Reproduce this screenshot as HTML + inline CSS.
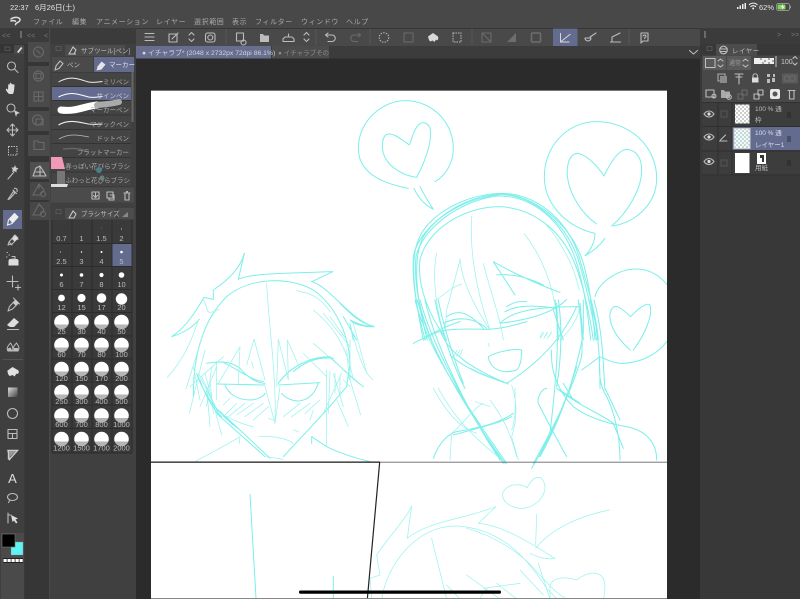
<!DOCTYPE html>
<html lang="ja"><head><meta charset="utf-8"><title>CLIP STUDIO</title>
<style>
html,body{margin:0;padding:0;background:#2b2b2b;width:800px;height:599px;overflow:hidden}
svg{display:block;position:absolute;left:0;top:0;filter:blur(.35px)}
text{font-family:"Liberation Sans","Noto Sans CJK JP",sans-serif;fill:#a8a8a8;font-size:7px}
.i{fill:none;stroke:#bcbcbc;stroke-width:1.1;stroke-linecap:round;stroke-linejoin:round}
.d{fill:none;stroke:#6a6a6a;stroke-width:1.1}
.s{fill:none;stroke:#7eefea;stroke-width:3.1;stroke-linecap:round;stroke-linejoin:round}
.t{stroke-width:2.2;stroke:#98f3ef}
.sz text{font-size:7.5px;text-anchor:middle;fill:#bcbcbc}
.sz circle{fill:#fff}
.sz .b{fill:url(#g)}
</style></head><body>
<svg width="800" height="599" viewBox="0 0 800 599" xmlns="http://www.w3.org/2000/svg">
<defs><linearGradient id="g" x1="0" y1="0" x2="0" y2="1"><stop offset=".66" stop-color="#fff"/><stop offset=".66" stop-color="#b5b5b5"/></linearGradient>
<clipPath id="cv"><rect x="151" y="90" width="516" height="509"/></clipPath></defs>
<!-- canvas -->
<rect width="800" height="599" fill="#2b2b2b"/>
<rect x="151" y="90" width="516" height="509" fill="#fff"/>
<rect x="151" y="90" width="516" height="1" fill="#777"/>
<g clip-path="url(#cv)">
<!-- Drawing group A: bubbles and girl top -->
<g transform="translate(340,90) scale(.33333)">
<path class="s" d="M205 295C150 285 55 260 55 175C55 90 130 32 195 32C280 32 340 100 340 175C340 215 320 255 285 275"/>
<path class="s" d="M222 295C235 325 255 345 280 358C265 335 250 310 240 290"/>
<path class="s" d="M208 165C185 150 165 130 145 132C125 135 125 170 130 190C145 235 195 258 230 262C250 225 272 170 272 130C272 100 250 90 235 105C220 120 215 150 208 165"/>
<path class="s" d="M765 430C690 415 613 350 613 260C613 170 680 95 770 95C870 95 950 170 950 265C950 340 890 395 820 408"/>
<path class="s" d="M792 258C770 225 735 190 710 190C685 195 680 230 682 260C690 320 730 375 770 402M792 258C810 220 835 180 860 178C890 180 905 205 905 240C905 300 860 370 815 408"/>
<path class="s" d="M765 430C765 450 755 480 735 497C760 485 780 465 795 445"/>
<path class="s" d="M765 620C775 580 830 537 890 537C930 537 965 560 985 590"/>
<path class="s" d="M250 750C230 650 205 520 235 450C260 380 370 310 490 310C600 315 690 400 720 510C740 580 770 680 775 750"/>
<path class="s" d="M262 750C235 650 215 530 245 450C280 380 380 320 500 312C610 330 700 420 730 520C750 590 760 680 765 750"/>
<path class="s" d="M275 750C245 680 220 590 228 500C245 420 350 335 470 318C560 315 650 370 700 490C730 570 745 680 752 750"/>
<path class="s" d="M256 750C232 670 212 560 222 490C240 420 340 330 460 314C570 305 670 390 712 500C738 580 758 680 770 750"/>
<path class="s" d="M320 750C270 680 230 590 240 510C260 420 370 350 480 350C580 355 660 420 700 510C730 580 750 680 760 750"/>
<path class="s t" d="M395 380C390 460 400 580 450 720M553 432C600 490 640 580 650 680L665 750M290 490C275 560 290 680 320 750M360 505C365 580 410 660 450 720M360 510L320 660L315 720M430 520C450 600 480 680 490 750M615 400C660 450 700 520 718 600"/>
<path class="s" d="M460 515L525 615M460 515C520 550 610 590 660 607M470 555C520 550 570 565 610 585M480 700C510 670 560 650 720 650M500 650C530 630 550 635 560 635M480 700C560 690 640 670 680 628M495 665C530 645 580 645 650 655"/>
<path class="s" d="M250 750C290 715 350 715 440 718C500 715 520 705 560 695M320 680C350 660 380 660 430 715M310 700C350 680 400 680 440 715"/>
<path class="s t" d="M290 630C320 605 340 590 365 582M720 650C710 700 680 730 660 750M600 745L612 728M612 745L622 730M622 745L634 728"/>
<path class="s" d="M0 640C30 670 60 700 103 710C80 712 50 705 35 695M30 700L40 750M10 680L50 750"/>
<path class="s" d="M650 640L655 750M640 660L670 750M720 640L730 750"/>
</g>
<!-- Drawing group B: girl bottom -->
<g transform="translate(400,300) scale(.33333)">
<path class="s" d="M45 0C70 100 130 220 320 490M60 0C90 110 170 280 310 490M75 0C100 110 180 300 300 480M52 0C80 110 150 260 315 490M105 0C120 80 160 200 195 265M115 0C130 80 170 200 190 250"/>
<path class="s" d="M40 130C80 110 130 80 180 65"/>
<path class="s" d="M120 90C140 150 200 200 320 250C400 200 480 130 530 20M210 205C250 225 290 240 325 252M150 165C190 200 240 225 310 245"/>
<path class="s" d="M265 170C290 155 340 145 365 150C365 180 360 200 350 210C320 220 290 215 275 195C268 185 265 175 265 170"/>
<path class="s t" d="M160 170L172 150M170 170L180 150M178 170L188 148M420 112L428 95M432 115L442 96M445 112L455 96M265 130L268 140"/>
<path class="s t" d="M335 255C350 300 355 350 335 410L355 480M345 265C345 300 350 350 335 390"/>
<path class="s" d="M100 475C120 420 150 400 170 395C230 385 300 370 340 340M160 405C250 380 310 365 335 350"/>
<path class="s t" d="M150 480L155 400C190 370 225 320 250 310M225 305L270 320M270 300C300 340 330 390 350 470M100 265C130 320 170 380 230 400M115 265C150 330 200 400 320 490"/>
<path class="s" d="M440 265C425 265 410 295 415 310C430 340 450 380 500 470"/>
<path class="s" d="M400 490C440 420 510 290 545 170C550 100 540 50 535 0M395 505C440 430 480 350 500 290M420 470C470 380 520 260 550 100L550 0M410 480C460 390 500 300 530 200"/>
<path class="s" d="M465 0C480 100 470 230 450 400L420 470M475 0C490 100 480 200 470 260"/>
<path class="s" d="M455 150C450 220 480 280 520 320C560 350 620 370 680 380C730 390 770 420 770 480M470 265C540 320 600 340 640 370L670 445M480 270L540 310M490 250L520 300"/>
<path class="s" d="M570 0C600 100 600 210 600 265M582 0C610 100 610 210 615 270M600 170C595 220 600 260 620 290C640 330 660 400 660 480M615 265L660 360"/>
<path class="s" d="M800 125C770 165 720 190 660 190C640 188 620 180 605 172M545 210L600 170"/>
<path class="s" d="M692 50C670 30 650 12 640 22C620 40 625 90 690 150M692 50C710 30 740 5 750 15C760 50 730 110 700 150"/>
</g>
<!-- Drawing group C: boy -->
<g transform="translate(150,240) scale(.33333)">
<path class="s" d="M283 40C275 70 250 110 190 150L190 178L162 172C140 210 110 260 65 290C100 280 130 260 148 238"/>
<path class="s" d="M283 40L265 118C300 100 400 100 548 95L485 125C540 140 600 240 672 260C640 258 620 250 600 240"/>
<path class="s" d="M130 470C130 340 160 240 230 170C300 110 420 110 490 150C560 200 600 290 600 380"/>
<path class="s t" d="M350 130C355 250 380 400 375 550"/>
<path class="s t" d="M52 412C90 370 120 320 145 240M108 447L160 280M118 520L165 330M120 440L220 350M150 500L200 380M165 400L215 585M180 420L190 520M170 440L180 560M440 152C480 160 510 170 540 215M160 180C180 210 160 230 208 208M130 380L150 480M145 400L205 520M155 410L210 530M185 380L170 500M200 365L200 480"/>
<path class="s" d="M170 370C200 365 240 360 270 385C290 410 320 430 345 430M215 365C260 385 300 420 340 425M200 432L345 435M225 435C235 460 260 480 300 480C320 480 340 470 345 460"/>
<path class="s" d="M385 435L510 428M395 460C420 490 480 500 505 430M385 430C420 380 480 350 540 350C570 380 600 410 640 440M430 395C470 360 510 350 550 355"/>
<path class="s t" d="M265 430L270 320L205 430M290 375L312 297L345 420M380 440L385 298L415 420L412 300L450 385M345 440L375 550L390 440M460 340L530 410M490 310L640 440M305 365L310 385"/>
<path class="s" d="M140 400C160 460 200 520 270 570L360 655M400 650L530 510L590 440L600 370M150 420C170 480 200 520 215 530M205 510L275 575M200 520L345 650"/>
<path class="s t" d="M210 520C240 535 280 555 310 560M328 590C360 585 410 595 430 610M135 665C180 640 230 615 270 590L268 610M350 650L400 658M355 535L370 540M430 570L445 575"/>
<path class="s" d="M485 610L485 590L530 620C570 640 620 655 660 665"/>
<path class="s t" d="M490 210C540 250 590 310 610 420M600 250C620 330 640 400 670 420M610 250L650 400M530 390L530 620M540 395L535 520M560 480L595 560M600 420L632 525M540 230L590 300M590 330L598 420M575 400L520 520M520 220L600 320M550 400L580 500M580 420L600 440M600 300L600 420M555 400L555 460M570 410L570 470"/>
<path class="s t" d="M220 530L260 490M235 530L285 490M260 525L310 490M285 530L340 490M220 495L240 475M400 530L450 490M425 530L480 490M465 520L510 480M480 540L490 510M310 540L355 500"/>
</g>
<!-- panel lines -->
<rect x="151" y="461.500" width="229" height="1.300" fill="#222"/>
<rect x="380" y="461.700" width="287" height="1" fill="#777"/>
<!-- Drawing group D: lower panel -->
<g transform="translate(150,455) scale(.33333)">
<path class="s" d="M300 118C305 200 312 320 318 432M550 365L550 432"/>
<path class="s t" d="M1132 98C1110 85 1075 85 1060 110C1050 135 1080 160 1115 160C1150 160 1185 130 1185 95C1180 55 1150 60 1132 98M1160 178L1157 270"/>
<path class="s t" d="M785 152C770 190 720 240 680 300L690 360L660 370L665 432M785 152L772 250C830 200 950 190 1038 155L985 205C1060 210 1150 270 1215 310C1190 315 1160 305 1140 295"/>
<path class="s t" d="M695 432C710 330 800 210 920 213C1040 220 1120 290 1190 400L1220 432M950 220C1040 245 1120 300 1160 350C1190 380 1210 410 1250 432M1157 280C1200 225 1280 185 1378 165M845 250L890 432M950 360L1050 432M1110 345L1180 420M1165 325L1200 432M1200 432L1200 390C1210 365 1250 365 1280 375C1310 350 1360 340 1365 390C1365 410 1362 425 1360 432M1000 400L1110 385M990 430L1010 400M1040 385L1100 432M890 390L930 432"/>
<path d="M689 22L652 432" fill="none" stroke="#222" stroke-width="3.600"/>
</g>
</g>
<rect x="151" y="598" width="516" height="1" fill="#888"/>
<rect x="299" y="590.500" width="202" height="3.200" rx="1.500" fill="#000"/>

<!-- top bars -->
<rect width="800" height="28" fill="#484848"/>
<rect x="136" y="28" width="564" height="18" fill="#494949"/>
<rect y="28" width="800" height=".7" fill="#2e2e2e"/>
<rect x="136" y="46" width="564" height="12.500" fill="#3c3c3c"/>
<rect x="136" y="46" width="135" height="12.500" fill="#676e90"/>
<rect x="272" y="46" width="57" height="12.500" fill="#4c4c4c"/>
<text x="10" y="10" style="fill:#e6e6e6;font-size:7.500px">22:37</text>
<text x="35" y="10" style="fill:#e6e6e6;font-size:7.500px">6月26日(土)</text>
<path d="M11 19c3-2.500 9-2 9 .8c0 3-4.500 2.500-4.500 4.800M11 21c2-.6 3.500-.3 4.500.3" fill="none" stroke="#ddd" stroke-width="1.500" stroke-linecap="round"/>
<g style="letter-spacing:.6px">
<text x="33" y="24">ファイル</text><text x="72" y="24">編集</text><text x="96" y="24">アニメーション</text><text x="156" y="24">レイヤー</text><text x="194" y="24">選択範囲</text><text x="232" y="24">表示</text><text x="255" y="24">フィルター</text><text x="301" y="24">ウィンドウ</text><text x="346" y="24">ヘルプ</text>
</g>
<text x="142" y="55" style="fill:#d4d4d8;font-size:6.800px">● イチャラブ* (2048 x 2732px 72dpi 86.1%)</text>
<text x="278" y="55" style="fill:#8a8a8a;font-size:6.500px">● イチャラブその</text>
<path class="i" d="M689.500 50.500l4 3.500l4-3.500"/>
<!-- status -->
<path d="M737 9h1.500v-2h-1.500zM739.500 9H741v-3.500h-1.500zM742 9h1.500v-5h-1.500zM744.500 9H746V3h-1.500z" fill="#eee"/>
<path d="M749 5c2.500-2.500 6-2.500 8.500 0M750.500 6.800c1.500-1.500 4-1.500 5.500 0" fill="none" stroke="#eee" stroke-width="1.100"/><circle cx="753.200" cy="8.500" r="1" fill="#eee"/>
<text x="759" y="10" style="fill:#e6e6e6;font-size:7.500px">62%</text>
<rect x="776.500" y="3.500" width="13" height="7" rx="1.800" fill="none" stroke="#aaa" stroke-width=".7"/><rect x="777.500" y="4.500" width="8" height="5" rx="1" fill="#7ed957"/><path d="M783 4l-2 3.200h1.700l-.7 2.800l2.500-3.500h-1.600z" fill="#fff"/><rect x="790" y="5.800" width=".8" height="2.500" fill="#aaa"/>

<!-- toolbar -->
<g>
<rect x="553" y="28.500" width="24.500" height="17.500" fill="#636b8e"/>
<path d="M226 29v16M316 29v16M370 29v16M472 29v16M629 29v16" stroke="#5f5f5f" stroke-width=".7"/>
<path class="i" d="M145 33.500h9M145 37h9M145 40.500h9"/>
<path class="i" d="M169 34h8v8h-8zM172 39l6-6"/>
<path class="i" d="M189 35l2.500-2.500l2.500 2.500M189 39l2.500 2.500l2.500-2.500"/>
<rect x="205.500" y="33" width="9.500" height="9" rx="2" class="i"/><circle cx="210.300" cy="37.500" r="2.500" class="i"/>
<path class="i" d="M236.500 33h7v8h-7zM241 42.500a2.500 2.500 0 1 0 5 0a2.500 2.500 0 1 0-5 0"/>
<path d="M260 34h3l1 1.500h5v6.500h-9z" fill="#bcbcbc"/>
<path class="i" d="M283 41.500h11v-2.500l-2-2h-7l-2 2zM288.500 37v-3"/>
<path class="i" d="M304 35l2.500-2.500l2.500 2.500M304 39l2.500 2.500l2.500-2.500"/>
<path class="i" d="M326 35h6a3 3 0 0 1 0 6.500h-4M328 33l-2.500 2l2.500 2"/>
<path class="d" d="M360 35h-6a3 3 0 0 0 0 6.500h4M358 33l2.500 2l-2.500 2"/>
<circle cx="384" cy="37.500" r="4.800" fill="none" stroke="#bcbcbc" stroke-dasharray="1.500 1.200"/>
<path class="d" d="M404 33h9v9h-9z"/>
<path d="M428 36.500l5-3.500l5 3.500c1 3-1 5-2 3l-1.500 2.500l-2-1.500l-2 1c-1.500-.5-2-3-2.500-5z" fill="#d8d8d8"/>
<path d="M453 33h8v9h-8z" fill="none" stroke="#bcbcbc" stroke-dasharray="1.500 1"/>
<path class="d" d="M482 33h9v9h-9zM482 33l9 9"/>
<path d="M507 42h9v-9z" fill="#6e6e6e"/>
<rect x="531.500" y="33" width="9" height="9" rx="1" fill="none" stroke="#6e6e6e" stroke-width="1.500"/>
<path d="M560.500 33v9h9M560.500 42l10-8" fill="none" stroke="#d8d8dc" stroke-width="1"/>
<path class="i" d="M585 38h6a3 3 0 0 1-6 0M590 37l6-4"/>
<path class="i" d="M610.500 42h10M612 42v-5M612 37l8-4"/>
<path class="i" d="M641 33h7v8h-5l-2 2zM643 36c1-1.500 3-1 3 .3c0 1-1.500 1-1.500 2.200"/>
</g>

<!-- left strip headers -->
<rect y="28" width="136" height="600" fill="#363636"/>
<rect x="0" y="28" width="136" height="16" fill="#3b3b3b"/>
<text x="2" y="38" style="fill:#777;font-size:7px">&lt;&lt;</text><text x="27" y="38" style="fill:#777;font-size:7px">&lt;&lt;</text><text x="44" y="38" style="fill:#777;font-size:7px">&lt;</text>
<rect x="20" y="31" width="2" height="7" fill="#6a6a6a"/><rect x="131" y="31" width="2" height="7" fill="#6a6a6a"/>
<!-- tool col -->
<rect y="44" width="24.500" height="555" fill="#3f3f3f"/>
<rect y="44" width="24.500" height="9" fill="#353535"/><rect x="14" y="45" width="10" height="9" fill="#4a4a4a"/>
<path d="M17 52l4-5l1.500 1l-4 5z" fill="#ddd"/>
<rect x="5" y="47" width="5" height="3.500" fill="none" stroke="#666" stroke-width=".6"/>
<!-- tool icons -->
<circle cx="11.500" cy="66" r="4" class="i"/><path class="i" d="M14.500 69l3.500 3.500"/>
<path d="M9 94c-2-2-3.500-4-3-5s1.500 0 2 1l.2-5c0-1 1.300-1 1.300 0l.3-1.500c.2-1 1.500-1 1.500 0v1c.4-1 1.500-.8 1.500.2l.3 0c.5-.7 1.500-.5 1.400.5l-.5 5.800l-1 3z" fill="#ddd"/>
<circle cx="11" cy="108" r="4" class="i"/><path d="M14 110l6 3l-3 1l-1 3z" fill="#d0d0d0"/>
<path class="i" d="M12.500 124.500v11M7 130h11M10.500 126l2-2l2 2M10.500 134l2 2l2-2M9 128l-2 2l2 2M16 128l2 2l-2 2"/>
<rect x="8.500" y="146.500" width="8.500" height="8.500" fill="none" stroke="#bcbcbc" stroke-dasharray="1.500 1"/>
<path class="i" d="M8 179l6-7"/><path d="M15 165l1 2.500l2.500 1l-2 1.500v2.500l-2-1.500l-2.500 1l.8-2.500l-1.500-2l2.700 0z" fill="#ccc"/>
<path class="i" d="M9 198l-1 1.500l1.500-.5l5.500-6l-1.500-1.500zM13 190l3.500 3.500M14.500 188.500c1-1 3.500 1 2.500 3"/>
<rect x="3" y="210" width="19" height="19" fill="#636b8e"/>
<path d="M7.500 225l1-5l6-6.500l3.500 3.500l-6 6.500z" fill="none" stroke="#eee" stroke-width="1.100"/><path d="M9 219l3 4l6-6.500l-3.500-3.500z" fill="#eee"/>
<path class="i" d="M8 245l1-3l6-7l3 3l-6 6zM9 242l3 3M14 235.500l4 4"/><path d="M12 239l3-3.500l3 3l-3.500 3z" fill="#ddd"/>
<path d="M9.500 259h7a2 2 0 0 1 2 2v4.500h-10v-5z" fill="#ddd"/><path class="i" d="M12 256.500h3v2.500h-3M7 252.500h.5M9 255h.5M6.500 257h.5"/>
<path class="i" d="M12.500 276v11M7 281.500h11M18 285v5M15.500 287.500h5"/>
<path class="i" d="M8 311l1.500-4.500l6-6.500l3 3l-6 6zM13.500 298l6 6"/><path d="M13 303l3-3l2.500 2.500l-3 3z" fill="#ccc"/>
<path d="M7 325l7-7l5 4l-5 5h-4z" fill="#ddd"/><path class="i" d="M7.500 329.500h11"/>
<path d="M8 351c-2-3 0-5 2.500-8c2 2.500 3 5 2 8zM13.500 351c-1-3 1-6 3-8c2 3 3.500 5 1.500 8z" fill="none" stroke="#bcbcbc"/><path d="M8 351c-1-2 0-3 2.500-3.500l2 3.500zM14 351l0-3l4 0l0 3z" fill="#bcbcbc"/>
<path d="M3 359.500h20" stroke="#5c5c5c" stroke-width=".8"/>
<path d="M7 371l5.500-4l6 3.500c1 3-1 4-2 3l-2 3l-2-1.500l-2.500 1c-1.500-.5-2.500-3-2.500-5z" fill="#e0e0e0"/>
<defs><linearGradient id="gr" x1="0" y1="0" x2="1" y2="1"><stop offset="0" stop-color="#ddd"/><stop offset="1" stop-color="#444"/></linearGradient></defs>
<rect x="8" y="387.500" width="9.500" height="9.500" fill="url(#gr)"/>
<circle cx="12.500" cy="413.500" r="5" class="i"/>
<path class="i" d="M8 429.500h9v9h-9zM8 433.500h9M12.500 433.500v5"/>
<path d="M8 450.500h9.500l-8 9z M8.500 450.500v9" fill="none" stroke="#ccc" stroke-width="1.400"/><path d="M9 451h7l-7 7z" fill="#999"/>
<text x="12.500" y="483" text-anchor="middle" style="font-size:13px;fill:#ddd">A</text>
<ellipse cx="12.500" cy="497" rx="5" ry="3.500" class="i"/><path class="i" d="M10 500l-1.500 2.500"/>
<path class="i" d="M8 513v10M8 515h3"/><path d="M11 515l7 3.500l-2.500 1l2 3l-1.500 1l-2-3l-1.500 1.500z" fill="#ddd"/>
<!-- colour -->
<rect x="1" y="533" width="23" height="66" fill="#4a4a4a"/>
<rect x="10" y="541" width="14" height="15" fill="#3c3c3c"/>
<rect x="11" y="542" width="12" height="13" fill="#5ef2f4" stroke="#999" stroke-width=".5"/>
<rect x="2" y="534" width="13" height="13" fill="#000" stroke="#777" stroke-width=".6"/>
<rect x="3" y="558" width="20" height="5" fill="#222"/>
<g fill="#fff"><rect x="3.500" y="559" width="3.200" height="3"/><rect x="7.500" y="559" width="3.200" height="3"/><rect x="11.500" y="559" width="3.200" height="3"/><rect x="15.500" y="559" width="3.200" height="3"/><rect x="19.500" y="559" width="3.200" height="3"/></g>

<!-- sub col -->
<rect x="28" y="42" width="21" height="20" fill="#4a4a4a"/><rect x="28" y="66" width="21" height="41" fill="#4a4a4a"/><rect x="28" y="111" width="21" height="20" fill="#4a4a4a"/><rect x="28" y="135" width="21" height="21" fill="#4a4a4a"/>
<rect x="30" y="162" width="19" height="17" fill="#4f4f4f"/><rect x="30" y="182" width="19" height="18" fill="#474747"/><rect x="30" y="202" width="19" height="18" fill="#474747"/>
<circle cx="38.500" cy="52" r="5" class="d"/><path class="d" d="M36.500 50l4 4"/><circle cx="38.500" cy="76" r="5" class="d"/><rect x="36" y="73.500" width="5" height="5" class="d"/><path class="d" d="M34 92h9v9h-9zM34 96.500h9M38.500 92v9"/><circle cx="37.500" cy="120" r="5" class="d"/><path class="d" d="M36 119h7v6h-7z"/><path class="d" d="M34 141h4l1 1.500h5v7h-10z"/>
<path class="i" d="M33 176h13l-2-4l-4-6l-4 2zM36 172h8M40 166v10"/>
<path class="d" d="M33 195l6-11l5 6l-4 5zM39 184v5"/><circle cx="43" cy="194" r="2.500" class="d"/>
<path class="d" d="M33 215l6-11l5 6l-4 5z"/><circle cx="43" cy="214" r="2.500" class="d"/>
<rect x="49.500" y="28" width=".8" height="571" fill="#595959"/>

<!-- subtool panel -->
<rect x="50.300" y="28" width="85.700" height="571" fill="#404040"/>
<rect x="50.300" y="28" width="85.700" height="16" fill="#3b3b3b"/>
<rect x="65" y="45" width="60" height="11" fill="#4c4c4c"/>
<path d="M69 54l4-7l3 3l-2 4zM72 54h4" fill="none" stroke="#ccc"/>
<rect x="56" y="46.500" width="5" height="4" fill="none" stroke="#666" stroke-width=".6"/>
<text x="81" y="53" style="fill:#bcbcbc;font-size:6.500px">サブツール[ペン]</text>
<rect x="52" y="57" width="41" height="15" fill="#4a4a4a"/><rect x="94" y="57" width="40" height="15" fill="#636b8e"/>
<path class="i" d="M55 70l1-4l4-5l3 2.500l-4 5z"/><path d="M96.500 70.500l1-4l4-5l4 3l-4 5z" fill="#e4e4e8"/>
<text x="67" y="67" style="font-size:6.500px;fill:#bcbcbc">ペン</text><text x="109" y="67" style="font-size:6.500px;fill:#e2e2e6">マーカー</text>
<!-- brush list -->
<rect x="52" y="72" width="79" height="115" fill="#333"/>
<g fill="#444"><rect x="52" y="72.500" width="79" height="13.500"/><rect x="52" y="101" width="79" height="13.500"/><rect x="52" y="115.500" width="79" height="13.500"/><rect x="52" y="130" width="79" height="13"/><rect x="52" y="144" width="79" height="13"/><rect x="52" y="158" width="79" height="13.500"/><rect x="52" y="172.500" width="79" height="14"/></g>
<rect x="52" y="87" width="79" height="13" fill="#636b8e"/>
<path d="M58.500 82c12-7 20-3 30 0c6 1 10 0 14-.5" fill="none" stroke="#eee" stroke-width="1"/>
<path d="M58.500 97c12-6 20-3 30 0c6 1 10 0 14-.5" fill="none" stroke="#fff" stroke-width="1"/>
<path d="M61 110c15 2 24-4 36-5" fill="none" stroke="#fff" stroke-width="7" stroke-linecap="round"/><path d="M97 105c10-1 14-1 22-3" fill="none" stroke="#aaa" stroke-width="6" stroke-linecap="round"/>
<path d="M58.500 125c10-6 20-3 30-1c6 1 10 0 14 0" fill="none" stroke="#eee" stroke-width="1.100"/>
<path d="M59 139c10-6 20-4 30-2" fill="none" stroke="#bbb" stroke-width=".8"/>
<path d="M63 149c10-1 18-1 25 3l-8-3" fill="none" stroke="#666" stroke-width="1.500"/>
<text x="129" y="84" style="font-size:6.500px;text-anchor:end">ミリペン</text><text x="129" y="98" style="font-size:6.500px;text-anchor:end;fill:#ccc">サインペン</text><text x="129" y="112" style="font-size:6.500px;text-anchor:end">マーカーペン</text><text x="129" y="126.500" style="font-size:6.500px;text-anchor:end">マジックペン</text><text x="129" y="140.500" style="font-size:6.500px;text-anchor:end">ドットペン</text><text x="129" y="154.500" style="font-size:6.500px;text-anchor:end">フラットマーカー</text><text x="130" y="168.500" style="font-size:6.500px;text-anchor:end">春っぽい花びらブラシ</text><text x="130" y="182.500" style="font-size:6.500px;text-anchor:end">ふわっと花びらブラシ</text>
<path d="M51 157h11l3 12H51z" fill="#f09ab8"/><path d="M57 171h8v13h-8z" fill="#777"/><path d="M51 184h17l-1 3H51z" fill="#ddd"/><circle cx="99" cy="170" r="3" fill="#4d7f88"/><circle cx="102" cy="178" r="2.500" fill="#6a7f80"/>
<rect x="131.500" y="72" width="2" height="50" fill="#666"/>
<rect x="51" y="187.500" width="83" height="15" fill="#4b4b4b"/>
<path class="i" d="M92 192h7v7h-7zM95.500 193v4M93.500 195.500l2 2l2-2"/><path class="i" d="M107 192h6v6h-6zM110 195h4v5h-5v-2"/><path class="i" d="M124 193h6M125 193v7h4v-7M126.500 192v-.5h1v.5"/>
<!-- size panel -->
<rect x="65" y="208" width="51" height="11" fill="#4c4c4c"/><rect x="118" y="208" width="16" height="11" fill="#4c4c4c"/>
<rect x="56" y="209.500" width="5" height="4" fill="none" stroke="#666" stroke-width=".6"/>
<path d="M69 218l4-7l3 3l-2 4z" fill="none" stroke="#ccc"/><path d="M122 217l6-5v5z" fill="#888"/>
<text x="81" y="216" style="font-size:6.500px;fill:#bcbcbc">ブラシサイズ</text>
<rect x="52" y="220" width="80" height="233" fill="#3a3a3a"/>
<rect x="112" y="243.500" width="20" height="22.500" fill="#636b8e"/>
<g stroke="#2c2c2c" stroke-width=".9" fill="none"><path d="M52 243.500h80M52 266.500h80M52 289.500h80M52 312.500h80M52 336h80M52 359h80M52 382h80M52 405h80M52 428.500h80M52 453h80M72 220v233M92 220v233M112 220v233M132 220v233M52 220v233"/></g>
<g class="sz">
<circle cx="121.500" cy="229" r=".5"/><circle cx="101.500" cy="228" r=".3"/>
<text x="61.500" y="241">0.7</text><text x="81.500" y="241">1</text><text x="101.500" y="241">1.5</text><text x="121.500" y="241">2</text>
<circle cx="60.500" cy="252" r=".5"/><circle cx="81.500" cy="252" r=".7"/><circle cx="101.500" cy="252" r="1"/><circle cx="121.500" cy="252" r="1.300"/>
<text x="61.500" y="264">2.5</text><text x="81.500" y="264">3</text><text x="101.500" y="264">4</text><text x="121.500" y="264">5</text>
<circle cx="61.500" cy="275" r="1.500"/><circle cx="81.500" cy="275" r="1.800"/><circle cx="101.500" cy="275" r="2.100"/><circle cx="121.500" cy="275" r="2.800"/>
<text x="61.500" y="287">6</text><text x="81.500" y="287">7</text><text x="101.500" y="287">8</text><text x="121.500" y="287">10</text>
<circle cx="61.500" cy="298" r="3.400"/><circle cx="81.500" cy="298" r="4.100"/><circle cx="101.500" cy="298" r="4.800"/><circle cx="121.500" cy="299" r="5.700"/>
<text x="61.500" y="310">12</text><text x="81.500" y="310">15</text><text x="101.500" y="310">17</text><text x="121.500" y="310">20</text>
<circle class="b" cx="61.500" cy="322" r="7.300"/><circle class="b" cx="81.500" cy="322" r="7.300"/><circle class="b" cx="101.500" cy="322" r="7.300"/><circle class="b" cx="121.500" cy="322" r="7.300"/>
<text x="61.500" y="334">25</text><text x="81.500" y="334">30</text><text x="101.500" y="334">40</text><text x="121.500" y="334">50</text>
<circle class="b" cx="61.500" cy="345" r="7.300"/><circle class="b" cx="81.500" cy="345" r="7.300"/><circle class="b" cx="101.500" cy="345" r="7.300"/><circle class="b" cx="121.500" cy="345" r="7.300"/>
<text x="61.500" y="357">60</text><text x="81.500" y="357">70</text><text x="101.500" y="357">80</text><text x="121.500" y="357">100</text>
<circle class="b" cx="61.500" cy="369" r="7.300"/><circle class="b" cx="81.500" cy="369" r="7.300"/><circle class="b" cx="101.500" cy="369" r="7.300"/><circle class="b" cx="121.500" cy="369" r="7.300"/>
<text x="61.500" y="381">120</text><text x="81.500" y="381">150</text><text x="101.500" y="381">170</text><text x="121.500" y="381">200</text>
<circle class="b" cx="61.500" cy="392" r="7.300"/><circle class="b" cx="81.500" cy="392" r="7.300"/><circle class="b" cx="101.500" cy="392" r="7.300"/><circle class="b" cx="121.500" cy="392" r="7.300"/>
<text x="61.500" y="404">250</text><text x="81.500" y="404">300</text><text x="101.500" y="404">400</text><text x="121.500" y="404">500</text>
<circle class="b" cx="61.500" cy="415.500" r="7.300"/><circle class="b" cx="81.500" cy="415.500" r="7.300"/><circle class="b" cx="101.500" cy="415.500" r="7.300"/><circle class="b" cx="121.500" cy="415.500" r="7.300"/>
<text x="61.500" y="427">600</text><text x="81.500" y="427">700</text><text x="101.500" y="427">800</text><text x="121.500" y="427">1000</text>
<circle class="b" cx="61.500" cy="439" r="7.300"/><circle class="b" cx="81.500" cy="439" r="7.300"/><circle class="b" cx="101.500" cy="439" r="7.300"/><circle class="b" cx="121.500" cy="439" r="7.300"/>
<text x="61.500" y="450.500">1200</text><text x="81.500" y="450.500">1500</text><text x="101.500" y="450.500">1700</text><text x="121.500" y="450.500">2000</text>
</g>

<!-- Right panel -->
<rect x="700" y="28" width="100" height="571" fill="#383838"/>
<rect x="700" y="28" width="100" height="16" fill="#3b3b3b"/>
<rect x="704" y="31" width="2" height="7" fill="#6a6a6a"/>
<text x="777" y="37" style="fill:#777;font-size:7px">&gt;</text><text x="791" y="37" style="fill:#777;font-size:7px">&gt;&gt;</text>
<rect x="716" y="44" width="41" height="11.500" fill="#4c4c4c"/>
<rect x="707" y="46.500" width="5" height="4" fill="none" stroke="#666" stroke-width=".6"/>
<circle cx="723.500" cy="50" r="3.800" class="i"/><path class="i" d="M720 49h7M720 51.500h7"/>
<text x="732" y="53" style="font-size:6.500px;fill:#bcbcbc;letter-spacing:.5px">レイヤー</text>
<rect x="702" y="55.500" width="98" height="47" fill="#484848"/>
<rect x="703" y="56" width="23" height="14" fill="#5a5a5a"/><rect x="727" y="56" width="24" height="14" fill="#5a5a5a"/>
<rect x="705.500" y="58.500" width="9.500" height="9" fill="none" stroke="#ccc" stroke-width=".9"/>
<path class="i" d="M718 61l2.500-2l2.500 2M718 65l2.500 2l2.500-2M743 61l2.500-2l2.500 2M743 65l2.500 2l2.500-2M793 58.500l2-2l2 2M793 63l2 2l2-2"/>
<text x="729" y="65" style="font-size:6px;fill:#999">通常</text>
<rect x="754" y="58" width="20" height="6" fill="#eee"/><path d="M760 58h2v2h-2zM764 60h2v2h-2zM768 58h2v2h-2zM772 60h2v2h-2zM762 62h2v2h-2zM768 62h2v2h-2z" fill="#aaa"/>
<rect x="775" y="56" width="2" height="11" fill="#888"/>
<text x="781" y="64" style="font-size:7px;fill:#ccc">100</text>
<path class="d" d="M718 74h7v7h-7z" style="stroke:#aaa"/><rect x="720" y="76" width="7" height="7" fill="#8a8a8a"/>
<path class="i" d="M735 74h8M739 74v10M736 77h6"/>
<path d="M752 77.500h6.500v5h-6.500z" fill="#ddd"/><path class="i" d="M753 77.500v-1.500a2 2 0 0 1 4.500 0v1.500"/>
<path d="M767 74h3v3h-3zM773 74h2v3h-2zM767 79h3v4h-3zM772 78h3v4h-3z" fill="#bbb"/>
<rect x="782" y="73.500" width="16" height="10" fill="#5a5a5a"/><circle cx="787" cy="78.500" r="2.800" class="d"/><circle cx="792.500" cy="78.500" r="2.800" class="d"/>
<path class="i" d="M706 90h8v7h-8zM714 98a2 2 0 1 0-.1 0"/>
<path d="M721 90h3l1 1.500h5v6.500h-9z" fill="#aaa"/><circle cx="729" cy="97" r="2.300" class="i"/>
<path class="d" d="M738 94h5v5h-5zM742 90h5v5h-5z"/>
<path class="i" d="M754 94h5v5h-5zM758 90h5v5h-5z"/>
<rect x="770" y="89" width="10" height="10" rx="2" fill="#e8e8e8"/><circle cx="775" cy="94" r="2.500" fill="#555"/>
<path class="i" d="M788 90.500h7M789.500 90.500v8.500h4.500v-8.500"/>
<!-- Layers -->
<rect x="702" y="102.500" width="98" height="72.500" fill="#3d3d3d"/>
<rect x="732" y="127" width="68" height="23" fill="#636b8e"/>
<path d="M702 102.500h98M702 126.500h98M702 151h98M702 175h98M718 102.500v72.500M732 102.500v72.500" stroke="#2c2c2c" stroke-width=".8"/>
<path class="i" style="stroke:#bbb" d="M704 114c3-4 7-4 10 0c-3 4-7 4-10 0z"/><circle cx="709" cy="114" r="1.600" fill="#ddd"/>
<path class="i" style="stroke:#bbb" d="M704 137c3-4 7-4 10 0c-3 4-7 4-10 0z"/><circle cx="709" cy="137" r="1.600" fill="#ddd"/>
<path class="i" style="stroke:#bbb" d="M704 161.500c3-4 7-4 10 0c-3 4-7 4-10 0z"/><circle cx="709" cy="161.500" r="1.600" fill="#ddd"/>
<rect x="721" y="111" width="6" height="6" fill="none" stroke="#555"/><rect x="721" y="160" width="6" height="6" fill="none" stroke="#555"/>
<path class="i" d="M719.500 141h7.500M720.500 140l5-5"/>
<defs><pattern id="ck" width="4" height="4" patternUnits="userSpaceOnUse"><rect width="4" height="4" fill="#fff"/><rect width="2" height="2" fill="#ccc"/><rect x="2" y="2" width="2" height="2" fill="#ccc"/></pattern></defs>
<rect x="735" y="104.500" width="14.500" height="19" fill="url(#ck)"/>
<rect x="734" y="128.500" width="16" height="20" fill="url(#ck)" stroke="#ccc" stroke-width="1"/><rect x="735" y="129.500" width="14" height="18" fill="#bff5ee" opacity=".3"/>
<rect x="735" y="153" width="14.500" height="20" fill="#fff"/>
<rect x="757" y="153" width="9" height="11" fill="#fff"/><path d="M760 155h4v7h-2v-4h-2z" fill="#333"/>
<text x="755" y="111" style="font-size:6.500px;fill:#bcbcbc">100 % 通</text><text x="755" y="122" style="font-size:6.500px;fill:#bcbcbc">枠</text>
<text x="755" y="135" style="font-size:6.500px;fill:#dde">100 % 通</text><text x="755" y="147" style="font-size:6.500px;fill:#dde">レイヤー1</text>
<text x="755" y="170" style="font-size:6.500px;fill:#bcbcbc">用紙</text>
<path d="M787 113h4M787 115h4M787 117h4M787 137h4M787 139h4M787 141h4M787 161h4M787 163h4M787 165h4" stroke="#222" stroke-width=".7"/>
</svg>
</body></html>
